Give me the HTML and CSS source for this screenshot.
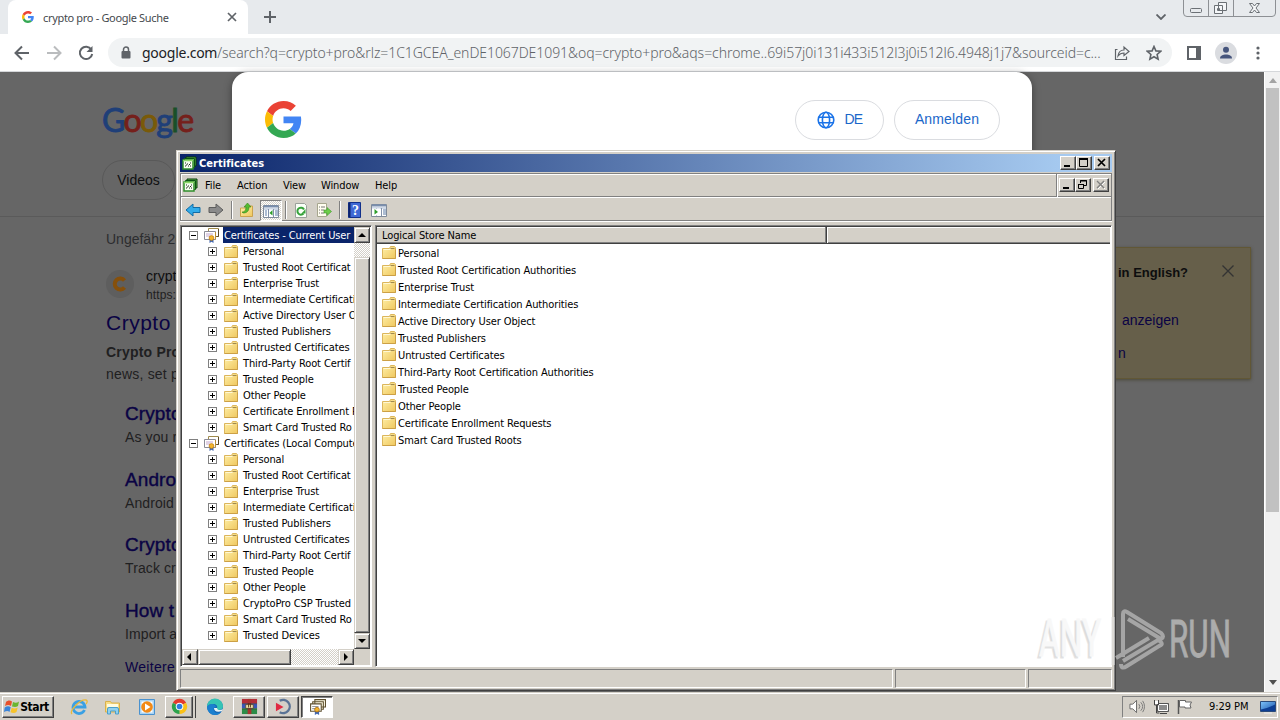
FILE: index.html
```html
<!DOCTYPE html>
<html lang="de">

<head>
    <meta charset="UTF-8">
    <meta name="viewport" content="width=device-width, initial-scale=1.0">
    <title>crypto pro - Google Suche</title>
    <link rel="stylesheet" href="styles.css">
</head>

<body>
    <!-- shared icons -->
    <svg class="defs" width="0" height="0">
        <defs>
            <linearGradient id="fold" x1="0" y1="0" x2="1" y2="1">
                <stop offset="0" stop-color="#fff0a8" />
                <stop offset="1" stop-color="#efc75e" />
            </linearGradient>
            <linearGradient id="blue" x1="0" y1="0" x2="1" y2="1">
                <stop offset="0" stop-color="#7fc4fb" />
                <stop offset="1" stop-color="#1550a8" />
            </linearGradient>
        </defs>
        <symbol id="google" viewBox="0 0 48 48">
            <path fill="#EA4335" d="M24 9.5c3.54 0 6.71 1.22 9.21 3.6l6.85-6.85C35.9 2.38 30.47 0 24 0 14.62 0 6.51 5.38 2.56 13.22l7.98 6.19C12.43 13.72 17.74 9.5 24 9.5z" />
            <path fill="#4285F4" d="M46.98 24.55c0-1.57-.15-3.09-.38-4.55H24v9.02h12.94c-.58 2.96-2.26 5.48-4.78 7.18l7.73 6c4.51-4.18 7.09-10.36 7.09-17.65z" />
            <path fill="#FBBC05" d="M10.53 28.59c-.48-1.45-.76-2.99-.76-4.59s.27-3.14.76-4.59l-7.98-6.19C.92 16.46 0 20.12 0 24c0 3.88.92 7.54 2.56 10.78l7.97-6.19z" />
            <path fill="#34A853" d="M24 48c6.48 0 11.93-2.13 15.89-5.81l-7.73-6c-2.15 1.45-4.92 2.3-8.16 2.3-6.26 0-11.57-4.22-13.47-9.91l-7.98 6.19C6.51 42.62 14.62 48 24 48z" />
        </symbol>
        <symbol id="folder" viewBox="0 0 14 13">
            <path d="M.5 2.5h7l1-2h4l1 1v11H.5z" fill="url(#fold)" stroke="#dcb65c" />
            <path d="M8.5 2.5h4" stroke="#9f8950" />
            <path d="M1.5 3.5h7" stroke="#fff8d5" />
            <path d="M.5 12.5h13v-9" fill="none" stroke="#cca045" />
        </symbol>
        <symbol id="cert" viewBox="0 0 15 15">
            <path d="M4.500 .5h10v8h-10z" fill="#fff" stroke="#a08a4a" />
            <path d="M14.500 1v7.500h-2" fill="none" stroke="#5a4a2a" />
            <path d="M.5 3.500h11v8H.5z" fill="#fff" stroke="#8a8a96" />
            <path d="M11.500 4v7.500" stroke="#c09030" />
            <path d="M2 6h7M2 8h4" stroke="#c2a5cc" />
            <path d="M5.500 10.500v4.500l2-1.200 2 1.200v-4.500z" fill="#4268b0" />
            <circle cx="7.500" cy="10" r="2.400" fill="#f3b52b" stroke="#b9760e" stroke-width=".7" />
        </symbol>
        <symbol id="cards" viewBox="0 0 16 16">
            <path d="M5.500 1.500h10v7h-10zM3.500 3.500h10v7h-10z" fill="#fffbe6" stroke="#5d4f2e" />
            <path d="M1.500 5.500h10v7h-10z" fill="#fff" stroke="#5d4f2e" />
            <path d="M3 8h6M3 10h3" stroke="#999" />
            <path d="M5.500 11.500v4.500l2-1.200 2 1.200v-4.500z" fill="#4268b0" />
            <circle cx="7.500" cy="11" r="2.200" fill="#f3b52b" stroke="#a8660e" stroke-width=".7" />
        </symbol>
        <symbol id="store" viewBox="0 0 15 14">
            <path d="M4 1h10v9H4z" fill="#5fb347" stroke="#063b0a" />
            <path d="M2.500 2.500h10v9h-10z" fill="#b7e49c" stroke="#0b5513" />
            <path d="M1 4h10v9H1z" fill="#f6fff0" stroke="#2f8d2a" stroke-width="1.500" />
            <path d="M1 4.500h10" stroke="#8ed66b" stroke-width="1.500" />
            <path d="M3 7h1M5 8h1M8 7h1M3 10h1M6 10h1M8 10h1M7 8.500h1M4 9h1" stroke="#222" stroke-width="1.200" />
        </symbol>
        <symbol id="arrow" viewBox="0 0 16 14">
            <path d="M1 7l7-6v3.500h7v5H8V13z" />
        </symbol>
        <symbol id="panel" viewBox="0 0 16 14">
            <path d="M.5 1.500h15v12H.5z" fill="#fff" stroke="#7f8a99" />
            <path d="M1 2.500h14" stroke="#7a8fae" stroke-width="2" />
            <path d="M1 5h14" stroke="#9eb2cf" />
            <path d="M5.500 5v8M10.500 5v8" stroke="#8392aa" />
            <path d="M12 7h3M12 9h3M12 11h3M2 7h2M2 9h2M2 11h2" stroke="#5b7ba5" />
        </symbol>
    </svg>

    <div class="chrome">
        <div class="tabs">
            <div class="tab">
                <svg class="tab-logo"><use href="#google" /></svg>
                <span class="tab-title">crypto pro - Google Suche</span>
                <svg class="tab-close" viewBox="0 0 10 10"><path d="M1 1l8 8M9 1l-8 8" /></svg>
            </div>
            <svg class="tab-new" viewBox="0 0 12 12"><path d="M6 0v12M0 6h12" /></svg>
            <svg class="tab-menu" viewBox="0 0 10 6"><path d="M.5.500L5 5 9.500.500" /></svg>
            <svg class="controls" viewBox="0 0 93 17">
                <path d="M.5 0v13q0 3.500 3.500 3.500h85q3.500 0 3.500-3.500V0M25.500 0v16M50.500 0v16" stroke="#8d9094" />
                <rect x="7.500" y="8.500" width="11" height="4" rx="1" />
                <path d="M35.500 2.500h8v8h-8zM31.500 5.500h8v8h-8z" fill="#f4f6f8" />
                <path d="M34.500 8.500h2v2h-2z" />
                <path d="M66.500 3.500h3l2 2.500 2-2.500h3l-3.500 4.500 3.500 4.500h-3l-2-2.500-2 2.500h-3L70 8z" fill="#f4f6f8" />
            </svg>
        </div>
        <div class="toolbar">
            <svg class="nav" viewBox="0 0 16 16"><path d="M15 8H2M8 1.500L1.500 8 8 14.500" /></svg>
            <svg class="nav off" viewBox="0 0 16 16"><path d="M1 8h13M8 1.500L14.500 8 8 14.500" /></svg>
            <svg class="nav" viewBox="0 0 16 16"><path d="M13.300 4.500A6.200 6.200 0 1 0 14.200 9" /><path d="M14.500 1v6h-6z" fill="#5f6368" stroke="none" /></svg>
            <div class="address">
                <svg class="lock" viewBox="0 0 10 13"><rect x=".5" y="5" width="9" height="7.500" rx="1" fill="#5f6368" /><path d="M2.500 5.500V3.500a2.500 2.500 0 0 1 5 0v2" fill="none" stroke="#5f6368" stroke-width="1.500" /></svg>
                <span class="url"><b>google.com</b>/search?q=crypto+pro&amp;rlz=1C1GCEA_enDE1067DE1091&amp;oq=crypto+pro&amp;aqs=chrome..69i57j0i131i433i512l3j0i512l6.4948j1j7&amp;sourceid=c...</span>
                <svg class="share" viewBox="0 0 16 16"><path d="M3.500 4.500h-2v10h11v-3M4 11c.5-4 3-6 6-6V2l5 4.500L10 10.500V8c-3 0-4.500 1-6 3z" /></svg>
                <svg class="star" viewBox="0 0 16 16"><path d="M8 1.500l1.900 4.400 4.800.4-3.600 3.200 1 4.700L8 11.700l-4.100 2.500 1-4.700L1.300 6.300l4.800-.4z" /></svg>
            </div>
            <svg class="side" viewBox="0 0 14 14"><path d="M1 1h12v12H1z" fill="none" stroke="#5f6368" stroke-width="2" /><path d="M9 0h5v14H9z" fill="#5f6368" /></svg>
            <svg class="avatar" viewBox="0 0 22 22"><circle cx="11" cy="11" r="11" fill="#dadce0" /><circle cx="11" cy="7.800" r="3" fill="#46557c" /><path d="M5 16.500c0-3 3-4 6-4s6 1 6 4z" fill="#46557c" /></svg>
            <svg class="dots" viewBox="0 0 4 14"><circle cx="2" cy="2" r="1.600" /><circle cx="2" cy="7" r="1.600" /><circle cx="2" cy="12" r="1.600" /></svg>
        </div>
        <div class="view">
            <div class="page">
                <div class="page-head">
                    <div class="logo"><span class="lb">G</span><span class="lr">o</span><span class="ly">o</span><span class="lb">g</span><span class="lg">l</span><span class="lr">e</span></div>
                    <span class="pill">Videos</span>
                </div>
                <div class="page-body">
                    <div class="results">
                        <div class="stats">Ungefähr 26</div>
                        <div class="site">
                            <svg class="site-icon" viewBox="0 0 28 28"><circle cx="14" cy="14" r="14" fill="#5e5e5e" /><path d="M18.500 10.500a5.500 5.500 0 1 0 0 7" fill="none" stroke="#86500b" stroke-width="4" /></svg>
                            <div class="site-text">
                                <div class="site-name">crypt</div>
                                <div class="site-url">https:</div>
                            </div>
                        </div>
                        <div class="title">Crypto</div>
                        <div class="desc"><b>Crypto Pro</b><br>news, set p</div>
                        <div class="links">
                            <div class="link">Crypto</div>
                            <div class="note">As you r</div>
                            <div class="link">Andro</div>
                            <div class="note">Android</div>
                            <div class="link">Crypto</div>
                            <div class="note">Track cr</div>
                            <div class="link">How t</div>
                            <div class="note">Import a</div>
                            <div class="more">Weitere</div>
                        </div>
                    </div>
                    <div class="lang">
                        <div class="lang-top"><b>in English?</b><svg viewBox="0 0 12 12"><path d="M.5.500l11 11M11.500.500l-11 11" /></svg></div>
                        <div class="lang-a">anzeigen</div>
                        <div class="lang-b">n</div>
                    </div>
                </div>
            </div>
            <div class="page-scroll">
                <svg viewBox="0 0 8 5"><path d="M0 5l4-5 4 5z" fill="#a3a3a3" /></svg>
                <div class="page-thumb"></div>
                <svg viewBox="0 0 8 5"><path d="M0 0h8L4 5z" fill="#505050" /></svg>
            </div>
            <div class="consent">
                <svg class="consent-logo"><use href="#google" /></svg>
                <div class="btn btn-de">
                    <svg viewBox="0 0 18 18"><circle cx="9" cy="9" r="7.800" /><ellipse cx="9" cy="9" rx="3.600" ry="7.800" /><path d="M1.500 6.300h15M1.500 11.700h15" /></svg>
                    DE
                </div>
                <div class="btn">Anmelden</div>
            </div>
        </div>
    </div>

    <div class="mmc">
        <div class="mmc-title">
            <svg class="i15"><use href="#store" /></svg>
            <span>Certificates</span>
            <div class="wbtns">
                <svg class="wbtn" viewBox="0 0 14 12"><path d="M3 9h6" stroke-width="2" /></svg>
                <svg class="wbtn" viewBox="0 0 14 12"><path d="M2 2h9" stroke-width="2" /><path d="M2.500 1v8.500h8V1" /></svg>
                <svg class="wbtn last" viewBox="0 0 14 12"><path d="M3 2l7 7M10 2l-7 7" stroke-width="1.700" /></svg>
            </div>
        </div>
        <div class="mmc-menu">
            <svg class="i15"><use href="#store" /></svg>
            <span class="m1">File</span><span class="m2">Action</span><span class="m3">View</span><span class="m4">Window</span><span>Help</span>
            <div class="wbtns child">
                <svg class="wbtn" viewBox="0 0 14 12"><path d="M3 9h6" stroke-width="2" /></svg>
                <svg class="wbtn" viewBox="0 0 14 12"><path d="M4.500 4V1.500h6v5H8M4 2h7M2 5.500h6" /><path d="M2.500 5v4.500h5V5" /></svg>
                <svg class="wbtn last dis" viewBox="0 0 14 12"><path d="M4 3l7 7M11 3l-7 7" stroke="#fff" /><path d="M3 2l7 7M10 2l-7 7" stroke-width="1.300" /></svg>
            </div>
        </div>
        <div class="mmc-tools">
            <svg class="t16" fill="#31abe9" stroke="#126ca5"><use href="#arrow" /></svg>
            <svg class="t16 flip" fill="#8a8a8a" stroke="#5d5d5d"><use href="#arrow" /></svg>
            <i class="sep"></i>
            <svg class="t16" viewBox="0 0 16 16"><path d="M1.500 6h6l1-2h5v10.500h-12z" fill="url(#fold)" stroke="#cba34d" /><path d="M3 10c3 0 4-2 4-5H5l3.500-4L12 5h-2c0 4-2 6-6 6z" fill="#54bb2f" stroke="#35851b" stroke-width=".6" /></svg>
            <span class="pressed"><svg class="t16" viewBox="0 0 16 14"><use href="#panel" /><path d="M6 5.500h4v7H6z" fill="#fff" /><path d="M9.500 6v5.500L6.500 9z" fill="#2f9d2a" /></svg></span>
            <i class="sep s2"></i>
            <svg class="t16 r" viewBox="0 0 16 16"><path d="M2.500 1.500h9l2 2v12h-11z" fill="#f9fff7" stroke="#9aa09a" /><path d="M10.500 11.500A3.500 3.500 0 1 1 11 7.500" fill="none" stroke="#35a23a" stroke-width="2" /><path d="M12.500 7v4.500H8.500z" fill="#35a23a" /></svg>
            <svg class="t16 e" viewBox="0 0 16 16"><path d="M1.500 1.500h9v13h-9z" fill="#fffdf0" stroke="#a6a68e" /><path d="M3 5h1M3 8h1M3 11h1M5 5h4M5 8h3M5 11h3" stroke="#777" /><path d="M8 8h3V5.500L15.500 9.500 11 13.500V11H8z" fill="#6dcc4a" stroke="#3c9b28" stroke-width=".6" /></svg>
            <i class="sep s3"></i>
            <svg class="help" viewBox="0 0 13 16"><path d="M.5.500h12v15H.5z" fill="#3f68d4" stroke="#12308a" /><path d="M1.500 1v14" stroke="#0c226d" stroke-width="2" /><text x="7.500" y="13" text-anchor="middle">?</text></svg>
            <svg class="t16 p" viewBox="0 0 16 14"><use href="#panel" /><path d="M1 5.500h8v7H1z" fill="#fff" /><path d="M3.500 6v5.500L7 9z" fill="#2f9d2a" /></svg>
        </div>
        <div class="panes">
            <div class="tree">
                <div class="tree-main">
                    <div class="rows">
                        <div class="root sel"><i class="box minus"></i><svg class="cert"><use href="#cert" /></svg><span>Certificates - Current User</span></div>
                        <div class="row"><i class="box"></i><svg><use href="#folder" /></svg>Personal</div>
                        <div class="row"><i class="box"></i><svg><use href="#folder" /></svg>Trusted Root Certificat</div>
                        <div class="row"><i class="box"></i><svg><use href="#folder" /></svg>Enterprise Trust</div>
                        <div class="row"><i class="box"></i><svg><use href="#folder" /></svg>Intermediate Certificati</div>
                        <div class="row"><i class="box"></i><svg><use href="#folder" /></svg>Active Directory User O</div>
                        <div class="row"><i class="box"></i><svg><use href="#folder" /></svg>Trusted Publishers</div>
                        <div class="row"><i class="box"></i><svg><use href="#folder" /></svg>Untrusted Certificates</div>
                        <div class="row"><i class="box"></i><svg><use href="#folder" /></svg>Third-Party Root Certif</div>
                        <div class="row"><i class="box"></i><svg><use href="#folder" /></svg>Trusted People</div>
                        <div class="row"><i class="box"></i><svg><use href="#folder" /></svg>Other People</div>
                        <div class="row"><i class="box"></i><svg><use href="#folder" /></svg>Certificate Enrollment R</div>
                        <div class="row"><i class="box"></i><svg><use href="#folder" /></svg>Smart Card Trusted Ro</div>
                        <div class="root"><i class="box minus"></i><svg class="cert"><use href="#cert" /></svg><span>Certificates (Local Compute</span></div>
                        <div class="row"><i class="box"></i><svg><use href="#folder" /></svg>Personal</div>
                        <div class="row"><i class="box"></i><svg><use href="#folder" /></svg>Trusted Root Certificat</div>
                        <div class="row"><i class="box"></i><svg><use href="#folder" /></svg>Enterprise Trust</div>
                        <div class="row"><i class="box"></i><svg><use href="#folder" /></svg>Intermediate Certificati</div>
                        <div class="row"><i class="box"></i><svg><use href="#folder" /></svg>Trusted Publishers</div>
                        <div class="row"><i class="box"></i><svg><use href="#folder" /></svg>Untrusted Certificates</div>
                        <div class="row"><i class="box"></i><svg><use href="#folder" /></svg>Third-Party Root Certif</div>
                        <div class="row"><i class="box"></i><svg><use href="#folder" /></svg>Trusted People</div>
                        <div class="row"><i class="box"></i><svg><use href="#folder" /></svg>Other People</div>
                        <div class="row"><i class="box"></i><svg><use href="#folder" /></svg>CryptoPro CSP Trusted</div>
                        <div class="row"><i class="box"></i><svg><use href="#folder" /></svg>Smart Card Trusted Ro</div>
                        <div class="row"><i class="box"></i><svg><use href="#folder" /></svg>Trusted Devices</div>
                    </div>
                    <div class="vbar">
                        <svg class="sbtn" viewBox="0 0 14 14"><path d="M3 9h8L7 5z" /></svg>
                        <div class="vthumb"></div>
                        <svg class="sbtn" viewBox="0 0 14 14"><path d="M3 5h8L7 9z" /></svg>
                    </div>
                </div>
                <div class="hbar">
                    <svg class="sbtn" viewBox="0 0 14 14"><path d="M8 3v8L4 7z" /></svg>
                    <div class="hthumb"></div>
                    <svg class="sbtn end" viewBox="0 0 14 14"><path d="M5 3v8l4-4z" /></svg>
                    <div class="corner"></div>
                </div>
            </div>
            <div class="list">
                <div class="list-head"><span>Logical Store Name</span><i></i></div>
                <div class="item"><svg><use href="#folder" /></svg>Personal</div>
                <div class="item"><svg><use href="#folder" /></svg>Trusted Root Certification Authorities</div>
                <div class="item"><svg><use href="#folder" /></svg>Enterprise Trust</div>
                <div class="item"><svg><use href="#folder" /></svg>Intermediate Certification Authorities</div>
                <div class="item"><svg><use href="#folder" /></svg>Active Directory User Object</div>
                <div class="item"><svg><use href="#folder" /></svg>Trusted Publishers</div>
                <div class="item"><svg><use href="#folder" /></svg>Untrusted Certificates</div>
                <div class="item"><svg><use href="#folder" /></svg>Third-Party Root Certification Authorities</div>
                <div class="item"><svg><use href="#folder" /></svg>Trusted People</div>
                <div class="item"><svg><use href="#folder" /></svg>Other People</div>
                <div class="item"><svg><use href="#folder" /></svg>Certificate Enrollment Requests</div>
                <div class="item"><svg><use href="#folder" /></svg>Smart Card Trusted Roots</div>
            </div>
        </div>
        <div class="status"><i class="st1"></i><i class="st2"></i><i class="st3"></i></div>
    </div>

    <div class="taskbar">
        <div class="start">
            <svg viewBox="0 0 16 15"><path d="M2 3c2-2 4-2 6-.5L7 7C5 5.500 3 6 1 7z" fill="#e8502a" /><path d="M9 3c2 1 4 1 6-.5L14 7c-2 1.500-4 1-6 .5z" fill="#6ab52e" /><path d="M.7 8.500C3 7 5 7 6.700 8.300L5.500 13C4 11.500 2 12 0 13z" fill="#3b84d8" /><path d="M7.700 8.800c2 1 4 1 6-.3L12.500 13c-2 1.500-4 1-6 .3z" fill="#f7c32a" /></svg>
            <b>Start</b>
        </div>
        <svg class="task ie" viewBox="0 0 18 18"><path d="M14.500 12A6 6 0 1 1 15 9H4" fill="none" stroke="#3aa0e4" stroke-width="2.800" /><path d="M2 16C-1 13 10 1 16 2c2 .5 1 3 0 4" fill="none" stroke="#e9b93b" stroke-width="1.300" /></svg>
        <svg class="task ex" viewBox="0 0 18 18"><path d="M1.500 3.500h5l1 1.500h8v9h-14z" fill="#f8dd85" stroke="#d9b04b" /><path d="M3 6h11v3H3z" fill="#fffbe0" /><path d="M3.500 16v-5q0-1.500 1.500-1.500h8q1.500 0 1.500 1.500v5h-3v-3h-5v3z" fill="#8fd0ef" stroke="#4a9fca" /></svg>
        <svg class="task wm" viewBox="0 0 18 18"><path d="M1.500 1.500h15v15h-15z" fill="#a9d4f4" stroke="#4a92cf" /><path d="M3.500 3.500h11v11h-11z" fill="#fff" /><circle cx="9" cy="9" r="5.800" fill="#f28a17" /><path d="M7 5.500v7L12.500 9z" fill="#fff" /></svg>
        <div class="tbtn stack">
            <svg class="i18" viewBox="0 0 18 18"><path d="M9 9L2 5a8 8 0 0 1 14 0z" fill="#e33b2e" /><path d="M9 9l7-4a8 8 0 0 1-7 12z" fill="#fbc116" /><path d="M9 9v8A8 8 0 0 1 2 5z" fill="#2ba24c" /><circle cx="9" cy="9" r="4" fill="#fff" /><circle cx="9" cy="9" r="3" fill="#2f7de1" /></svg>
        </div>
        <svg class="task ed" viewBox="0 0 18 18"><circle cx="9" cy="9" r="8" fill="#1568b8" /><path d="M1 9a8 8 0 0 1 16-1c0 3-2 4-5 4-2 0-2-1-1-2 1-2-1-4-4-4S2 7 1 9z" fill="#35c3b4" /><path d="M1 9c2-4 8-4 9 0-2 0-3 2-2 4 1 2 4 3 7 1-3 5-13 4-14-5z" fill="#1b80cf" /><path d="M8 10c0 3 3 5 8 3l1-2c-3 2-6 1-6-1z" fill="#e6f2f5" /></svg>
        <div class="tbtn rar">
            <svg class="i18" viewBox="0 0 18 18"><path d="M1 1h16v5H1z" fill="#b52e38" /><path d="M1 6h16v5H1z" fill="#3a57b5" /><path d="M1 11h16v6H1z" fill="#2c8d48" /><path d="M7 1h4v16H7z" fill="#a83430" /><path d="M5 7h8v4H5z" fill="#eee1a8" stroke="#5a3c17" stroke-width=".7" /><path d="M8 6v4M10 6v4" stroke="#5a3c17" /><path d="M1 6h16M1 11.500h16" stroke="#222" stroke-width=".5" /></svg>
        </div>
        <div class="tbtn proc">
            <svg class="i18" viewBox="0 0 18 18"><path d="M5 3a7 7 0 1 1 0 12" fill="none" stroke="#5a7395" stroke-width="2.500" /><path d="M1 5l8 4.500L1 14z" fill="#e02a42" /></svg>
        </div>
        <div class="tbtn on"><svg class="i18"><use href="#cards" /></svg></div>
        <div class="tray">
            <svg viewBox="0 0 17 15"><path d="M1 5h3l4-4v13l-4-4H1z" fill="#fff" stroke="#666" /><path d="M10.500 5q2 2.500 0 5M12.500 3q4 4.500 0 9M14.500 1.500q4 6 0 12" fill="none" stroke="#777" /></svg>
            <svg viewBox="0 0 16 15"><path d="M4.500 4.500h11v8h-11z" fill="#8b8b8b" stroke="#555" /><path d="M5.500 5.500h9v6h-9z" fill="none" stroke="#fff" /><path d="M7 14.500h7M1.500 1v5h4V1M3.500 6v8h3" fill="none" stroke="#444" /><path d="M2 2h3v3H2z" fill="#fff" /></svg>
            <svg viewBox="0 0 16 15"><path d="M1.500 15V1" stroke="#555" stroke-width="1.500" /><path d="M2.500 1.500h6v1.500h6l-1.500 3 1 3h-6V8h-5.500z" fill="#fff" stroke="#666" /></svg>
            <span>9:29 PM</span>
            <svg class="desk" viewBox="0 0 16 14"><path d="M.5 1.500h15v10H.5z" fill="url(#blue)" stroke="#2a4a7a" /><path d="M1 9.500q6-1 14-5v6.500H1z" fill="#0d3e93" /><path d="M4 13h8" stroke="#eee" /></svg>
        </div>
    </div>

    <svg class="anyrun" viewBox="0 0 200 66">
        <g class="sh"><text x="1" y="50" textLength="62" lengthAdjust="spacingAndGlyphs">ANY</text></g>
        <text x="3" y="48" textLength="62" lengthAdjust="spacingAndGlyphs">ANY</text>
        <text x="133" y="49" textLength="62" lengthAdjust="spacingAndGlyphs">RUN</text>
        <path d="M77 9v48M87 49V6q0-4 4-2l34 21q4 4 0 6l-33-20M87 53l35-21q7 4 1 6L91 58q-6 4-6-2M80 50l33-20" />
    </svg>
</body>

</html>
```

FILE: styles.css
```css
body {
    margin: 0;
    width: 1280px;
    height: 720px;
    overflow: hidden;
    position: relative;
    background: #666;
    font-family: "DejaVu Sans Condensed", "DejaVu Sans", sans-serif;
    font-size: 11px;
    color: #000;
}

* {
    box-sizing: border-box;
}

svg {
    display: block;
    flex: none;
}

.defs {
    position: absolute;
}

/* browser */
.chrome {
    height: 692px;
    display: flex;
    flex-direction: column;
}

.tabs {
    height: 34px;
    background: #e7eaed;
    display: flex;
    align-items: flex-start;
}

.tab {
    width: 240px;
    height: 34px;
    margin-left: 8px;
    padding: 0 11px 0 14px;
    border-radius: 8px 8px 0 0;
    background: #fff;
    display: flex;
    align-items: center;
}

.tab-logo {
    width: 12px;
    height: 12px;
}

.tab-title {
    flex: 1;
    margin-left: 9px;
    font-family: "Noto Sans", sans-serif;
    font-size: 11px;
    letter-spacing: -0.33px;
    color: #45494d;
    white-space: nowrap;
}

.tab-close {
    width: 10px;
    height: 10px;
    stroke: #5f6368;
    stroke-width: 1.7;
}

.tab-new {
    width: 12px;
    height: 12px;
    margin: 11px 0 0 16px;
    stroke: #5f6368;
    stroke-width: 2;
}

.tab-menu {
    width: 10px;
    height: 6px;
    margin: 14px 17px 0 auto;
    fill: none;
    stroke: #5f6368;
    stroke-width: 1.8;
}

.controls {
    width: 93px;
    height: 17px;
    margin-right: 4px;
    fill: none;
    stroke: #6b7075;
}

.toolbar {
    height: 38px;
    background: #fff;
    border-bottom: 1px solid #d5d7da;
    display: flex;
    align-items: center;
    padding-left: 14px;
}

.nav {
    width: 16px;
    height: 16px;
    margin-right: 16px;
    fill: none;
    stroke: #5f6368;
    stroke-width: 2;
}

.nav.off {
    stroke: #babcbe;
}

.address {
    width: 1064px;
    height: 29px;
    margin-left: -2px;
    padding: 0 10px 0 13px;
    border-radius: 15px;
    background: #f1f3f4;
    display: flex;
    align-items: center;
}

.lock {
    width: 10px;
    height: 13px;
}

.url {
    width: 968px;
    margin-left: 11px;
    font-family: "Noto Sans", sans-serif;
    font-weight: 300;
    font-size: 14px;
    letter-spacing: -0.06px;
    white-space: nowrap;
    color: #5f6368;
}

.url b {
    font-weight: 400;
    letter-spacing: -0.25px;
    color: #202124;
}

.share,
.star {
    width: 16px;
    height: 16px;
    fill: none;
    stroke: #5f6368;
    stroke-width: 1.2;
}

.share {
    margin-left: 4px;
}

.star {
    margin-left: 16px;
    stroke-width: 1.6;
}

.side {
    width: 14px;
    height: 14px;
    margin-left: 15px;
}

.avatar {
    width: 22px;
    height: 22px;
    margin-left: 14px;
}

.dots {
    width: 4px;
    height: 14px;
    margin-left: 19px;
    fill: #5f6368;
}

.view {
    flex: 1;
    display: flex;
    position: relative;
    min-height: 0;
}

.page {
    width: 1264px;
    background: #666;
    font-family: "Liberation Sans", Arial, sans-serif;
    overflow: hidden;
}

.page-head {
    height: 145px;
    padding: 28px 0 0 102px;
    border-bottom: 1px solid #5a5a5a;
}

.logo {
    height: 60px;
    font-family: Lato, sans-serif;
    font-size: 32px;
    line-height: 40px;
    letter-spacing: -1.7px;
    -webkit-text-stroke: 0.9px;
}

.lb { color: #1f3f78; }
.lr { color: #75201b; }
.ly { color: #7a5a08; }
.lg { color: #195028; }

.pill {
    display: block;
    width: 73px;
    height: 40px;
    border: 1px solid #595959;
    border-radius: 20px;
    text-align: center;
    line-height: 39px;
    font-size: 14px;
    color: #101112;
}

.page-body {
    display: flex;
    justify-content: space-between;
    padding-left: 106px;
}

.results {
    width: 110px;
    white-space: nowrap;
    font-size: 14px;
    color: #1f2021;
}

.stats {
    margin-top: 14px;
    line-height: 16px;
    color: #2c2d2f;
}

.site {
    display: flex;
    margin-top: 19px;
    height: 40px;
}

.site-icon {
    width: 28px;
    height: 28px;
    margin: 4px 12px 0 0;
}

.site-name {
    line-height: 20px;
    color: #0d0d0e;
}

.site-url {
    line-height: 18px;
    font-size: 12px;
    letter-spacing: 0.1px;
    color: #1f2021;
}

.title {
    margin-top: 4px;
    font-size: 21px;
    line-height: 26px;
    letter-spacing: 0.5px;
    color: #0a0344;
}

.desc {
    margin-top: 5px;
    line-height: 22px;
    letter-spacing: 0.2px;
}

.links {
    padding: 14px 0 0 19px;
}

.link {
    font-size: 19px;
    line-height: 30px;
    letter-spacing: 0.1px;
    color: #0a0344;
    -webkit-text-stroke: 0.4px;
}

.note {
    height: 35.7px;
    line-height: 16px;
    letter-spacing: 0.1px;
}

.more {
    line-height: 16px;
    letter-spacing: 0.3px;
    margin-top: -3px;
    color: #0a0344;
}

.lang {
    width: 300px;
    height: 132px;
    margin: 30px 13px 0 0;
    padding: 17px 16px 0 166px;
    background: #665f4a;
    border: 1px solid #615736;
    box-shadow: 0 1px 3px #4b4838;
    font-size: 14px;
    color: #0a0344;
}

.lang-top {
    display: flex;
    justify-content: space-between;
    color: #0d0d0e;
    line-height: 16px;
    font-size: 13px;
}

.lang-top svg {
    width: 12px;
    height: 12px;
    stroke: #333;
    stroke-width: 1.3;
}

.lang-a {
    margin: 31px 0 0 4px;
}

.lang-b {
    margin-top: 17px;
}

.page-scroll {
    width: 16px;
    background: #f1f1f1;
    border-left: 1px solid #fff;
    display: flex;
    flex-direction: column;
    align-items: center;
    padding: 6px 0 7px;
}

.page-scroll svg {
    width: 8px;
    height: 5px;
}

.page-thumb {
    width: 13px;
    height: 424px;
    margin: 5px 0 auto;
    background: #c1c1c1;
}

/* consent dialog over the dimmed page */
.consent {
    position: absolute;
    left: 232px;
    top: 0;
    width: 800px;
    height: 600px;
    padding: 28px 32px 0 33px;
    border-radius: 16px;
    background: #fff;
    box-shadow: 0 2px 8px rgba(0, 0, 0, 0.4);
    display: flex;
    align-items: flex-start;
    gap: 10px;
    font-family: "Liberation Sans", Arial, sans-serif;
    font-size: 14px;
    color: #1a67c9;
}

.consent-logo {
    width: 37px;
    height: 37px;
    margin: 1px auto 0 0;
}

.btn {
    width: 106px;
    height: 40px;
    padding-bottom: 2px;
    border: 1px solid #dadce0;
    border-radius: 20px;
    display: flex;
    align-items: center;
    justify-content: center;
    letter-spacing: 0.15px;
}

.btn-de {
    width: 89px;
    gap: 10px;
    letter-spacing: -0.8px;
}

.btn-de svg {
    width: 18px;
    height: 18px;
    margin-top: 1px;
    fill: none;
    stroke: #1a73e8;
    stroke-width: 1.6;
}

/* mmc window */
.mmc {
    position: absolute;
    left: 176px;
    top: 150px;
    width: 940px;
    height: 541px;
    padding: 2px;
    background: #d4d0c8;
    border: 1px solid;
    border-color: #d4d0c8 #404040 #404040 #d4d0c8;
    box-shadow: inset 1px 1px #fff, inset -1px -1px #808080;
    letter-spacing: -0.11px;
    white-space: nowrap;
}

.mmc-title {
    height: 18px;
    margin: 1px 1px 0;
    padding: 0 2px;
    background: linear-gradient(90deg, #0a246a, #a6caf0 95%);
    color: #fff;
    font-weight: bold;
    letter-spacing: 0.05px;
    display: flex;
    align-items: center;
}

.mmc-title span {
    margin-left: 2px;
}

.i15 {
    width: 15px;
    height: 14px;
}

.wbtns {
    margin-left: auto;
    display: flex;
}

.wbtn {
    width: 16px;
    height: 14px;
    background: #d4d0c8;
    border: 1px solid;
    border-color: #fff #404040 #404040 #fff;
    box-shadow: inset -1px -1px #808080;
    stroke: #000;
    fill: none;
}

.wbtn.last {
    margin-left: 2px;
}

.wbtn.dis {
    stroke: #808080;
}

.child {
    height: 23px;
    padding: 4px 2px 0 2px;
    border-left: 1px solid #808080;
    box-shadow: inset 1px 0 #fff;
}

.mmc-menu {
    height: 24px;
    margin: 1px 1px 0;
    padding-left: 2px;
    border: 1px solid #808080;
    box-shadow: inset 1px 1px #fff;
    display: flex;
    align-items: center;
}

.mmc-menu span {
    padding-top: 1px;
}

.m1 { width: 32px; margin-left: 7px; }
.m2 { width: 46px; }
.m3 { width: 38px; }
.m4 { width: 54px; }

.mmc-tools {
    height: 24px;
    margin: 0 1px;
    padding: 3px 0 0 4px;
    border: 1px solid #808080;
    border-top: 0;
    box-shadow: inset 1px 1px #fff, 0 1px #fff;
    display: flex;
    align-items: center;
}

.t16 {
    width: 16px;
    height: 16px;
}

.flip {
    transform: scaleX(-1);
    margin-left: 7px;
}

.sep {
    width: 2px;
    height: 18px;
    margin: 0 6px 0 7px;
    border-left: 1px solid #808080;
    border-right: 1px solid #fff;
}

.s2 { margin: 0 6px 0 3px; }
.s3 { margin: 0 7px; }
.e { margin-left: 7px; }
.p { margin-left: 10px; }

.pressed {
    width: 22px;
    height: 21px;
    margin-left: 5px;
    padding: 2px;
    border: 1px solid;
    border-color: #808080 #fff #fff #808080;
    background: repeating-conic-gradient(#fff 0 25%, #d4d0c8 0 50%) 0 0 / 2px 2px;
}

.help {
    width: 13px;
    height: 16px;
}

.help text {
    font: bold 14px "Liberation Serif", serif;
    fill: #fff;
}

.panes {
    height: 442px;
    margin: 4px 1px 0;
    display: flex;
    gap: 3px;
}

.tree,
.list {
    background: #fff;
    border: 1px solid;
    border-color: #808080 #fff #fff #808080;
    box-shadow: inset 1px 1px #404040;
}

.tree {
    width: 192px;
    padding: 1px 0 1px 1px;
    display: flex;
    flex-direction: column;
}

.tree-main {
    flex: 1;
    display: flex;
    min-height: 0;
}

.rows {
    width: 172px;
    overflow: hidden;
}

.row,
.root {
    height: 16px;
    display: flex;
    align-items: center;
    line-height: 15px;
}

.root {
    padding-left: 7px;
}

.root span {
    margin-left: 4px;
    padding: 1px 1px 0;
    height: 16px;
}

.root.sel span {
    background: #0a246a;
    color: #fff;
    width: 131px;
}

.row {
    padding-left: 26px;
}

.row svg {
    width: 14px;
    height: 13px;
    margin: 0 5px 0 7px;
}

.cert {
    width: 15px;
    height: 15px;
    margin-left: 6px;
}

.box {
    flex: none;
    width: 9px;
    height: 9px;
    border: 1px solid #808080;
    background: linear-gradient(#000, #000) center / 5px 1px no-repeat, linear-gradient(#000, #000) center / 1px 5px no-repeat;
}

.box.minus {
    background: linear-gradient(#000, #000) center / 5px 1px no-repeat;
}

.vbar {
    width: 16px;
    display: flex;
    flex-direction: column;
    background: repeating-conic-gradient(#fff 0 25%, #d4d0c8 0 50%) 0 0 / 2px 2px;
}

.sbtn,
.vthumb,
.hthumb {
    width: 16px;
    height: 16px;
    background: #d4d0c8;
    border: 1px solid;
    border-color: #d4d0c8 #404040 #404040 #d4d0c8;
    box-shadow: inset 1px 1px #fff, inset -1px -1px #808080;
}

.vthumb {
    height: auto;
    flex: 1;
    margin-top: 14px;
}

.hbar {
    height: 16px;
    margin-right: 1px;
    display: flex;
    background: repeating-conic-gradient(#fff 0 25%, #d4d0c8 0 50%) 0 0 / 2px 2px;
}

.hthumb {
    width: 93px;
}

.end {
    margin-left: auto;
}

.corner {
    width: 16px;
    background: #d4d0c8;
}

.list {
    flex: 1;
    padding: 1px;
}

.list-head {
    height: 17px;
    margin-bottom: 1px;
    padding-left: 5px;
    background: #d4d0c8;
    border-bottom: 1px solid #404040;
    box-shadow: inset 0 1px #fff, inset 0 -1px #808080;
    display: flex;
    align-items: center;
}

.list-head span {
    width: 443px;
    padding-top: 1px;
}

.list-head i {
    width: 3px;
    height: 16px;
    border-left: 1px solid #808080;
    border-right: 1px solid #fff;
    background: #404040;
}

.item {
    height: 17px;
    padding-left: 5px;
    display: flex;
    align-items: center;
}

.item svg {
    width: 14px;
    height: 13px;
    margin: -2px 2px 0 0;
}

.status {
    height: 19px;
    margin: 2px 1px 0;
    display: flex;
    gap: 2px;
}

.status i {
    border: 1px solid;
    border-color: #808080 #fff #fff #808080;
}

.st1 { width: 713px; }
.st2 { width: 131px; }
.st3 { flex: 1; }

/* taskbar */
.taskbar {
    height: 28px;
    padding: 3px 2px 2px;
    background: #d4d0c8;
    box-shadow: inset 0 1px #d4d0c8, inset 0 2px #fff;
    display: flex;
    align-items: center;
}

.start,
.tbtn {
    height: 22px;
    border: 1px solid;
    border-color: #fff #404040 #404040 #fff;
    box-shadow: inset -1px -1px #808080;
    display: flex;
    align-items: center;
    justify-content: center;
}

.start {
    width: 52px;
    padding-right: 3px;
    font-size: 12px;
    letter-spacing: -0.4px;
}

.start svg {
    width: 16px;
    height: 15px;
}

.task {
    width: 18px;
    height: 18px;
}

.ie { margin-left: 16px; }
.ex { margin-left: 16px; }
.wm { margin-left: 16px; }
.ed { margin-left: 9px; }

.tbtn {
    width: 32px;
    margin-left: 2px;
}

.i18 {
    width: 17px;
    height: 17px;
}

.stack {
    width: 28px;
    margin: 0 4px 0 9px;
    box-shadow: inset -1px -1px #808080, 2px 0 #d4d0c8, 3px 0 #404040;
}

.rar {
    margin-left: 9px;
}

.on {
    background: #fff;
    border-color: #404040 #fff #fff #404040;
    box-shadow: inset 1px 1px #808080;
}

.tray {
    width: 156px;
    height: 22px;
    margin-left: auto;
    padding: 0 1px 0 6px;
    border: 1px solid;
    border-color: #808080 #fff #fff #808080;
    display: flex;
    align-items: center;
    gap: 8px;
}

.tray svg {
    width: 16px;
    height: 15px;
}

.tray span {
    margin-left: 8px;
    letter-spacing: -0.05px;
    white-space: nowrap;
}

.tray .desk {
    height: 14px;
    margin-left: auto;
}

/* watermark lies over everything */
.anyrun {
    position: absolute;
    left: 1036px;
    top: 608px;
    width: 200px;
    height: 66px;
    opacity: 0.5;
}

.anyrun text {
    font: 51px Roboto, sans-serif;
    fill: #f2f2f2;
    stroke: #f2f2f2;
    stroke-width: 0.8;
}

.anyrun .sh text {
    fill: #bbb;
    stroke: #ccc;
}

.anyrun path {
    fill: none;
    stroke: #e4e4e4;
    stroke-width: 4;
}
```
